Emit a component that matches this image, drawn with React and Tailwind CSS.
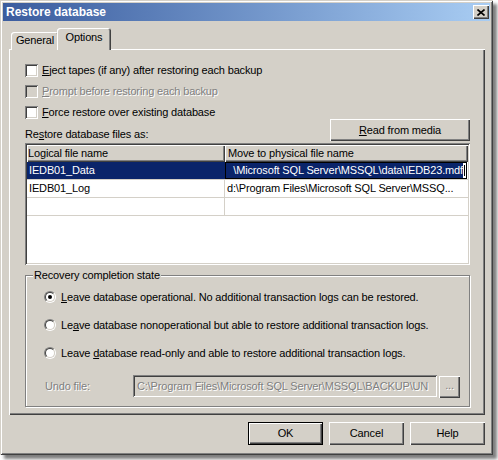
const raised = "shadow-[inset_1px_1px_0_#fff,inset_-1px_-1px_0_#404040,inset_-2px_-2px_0_#808080]";
const sunken = "shadow-[inset_1px_1px_0_#808080,inset_-1px_-1px_0_#fff,inset_2px_2px_0_#404040,inset_-2px_-2px_0_#d4d0c8]";
const dimText = "text-[#808080] [text-shadow:1px_1px_0_#fff]";

function Checkbox({ label, disabled }) {
  return (
    <div className="flex h-[21px] items-center">
      <div className={`h-[13px] w-[13px] ${sunken} ${disabled ? "bg-[#d4d0c8]" : "bg-white"}`} />
      <span className={`ml-[4px] ${disabled ? dimText : ""}`}>{label}</span>
    </div>
  );
}

function Radio({ checked, children }) {
  return (
    <div className="flex h-[28px] items-center pl-[18px]">
      <div className="h-[12px] w-[12px] rounded-full border border-t-[#808080] border-l-[#808080] border-r-white border-b-white">
        <div className="flex h-full w-full items-center justify-center rounded-full border border-t-[#404040] border-l-[#404040] border-r-[#d4d0c8] border-b-[#d4d0c8] bg-white">
          {checked && <div className="h-[4px] w-[4px] rounded-full bg-black" />}
        </div>
      </div>
      <span className="ml-[5px]">{children}</span>
    </div>
  );
}

function Button({ children, className = "", primary }) {
  return (
    <div className={`flex items-center justify-center bg-[#d4d0c8] ${primary ? "border border-black" : ""} ${className}`}>
      <div className={`flex h-full w-full items-center justify-center ${raised}`}>{children}</div>
    </div>
  );
}

export default function App() {
  return (
    <div className="h-[460px] w-[498px] bg-white text-[11px] tracking-[-0.15px] text-black [font-family:'Liberation_Sans',Arial,sans-serif]">
      <div className="flex h-[455px] w-[493px] flex-col bg-[#d4d0c8] p-[3px] shadow-[inset_1px_1px_0_#d4d0c8,inset_-1px_-1px_0_#404040,inset_2px_2px_0_#fff,inset_-2px_-2px_0_#808080,4px_4px_3px_rgba(0,0,0,0.5)]">
        {/* title bar */}
        <div className="flex h-[18px] items-center justify-between bg-gradient-to-r from-[#3b5c9e] to-[#a9cdf3] pl-[3px] pr-[1px]">
          <span className="text-[12px] font-bold tracking-normal text-white">Restore database</span>
          <div className={`flex h-[14px] w-[16px] items-center justify-center bg-[#d4d0c8] ${raised}`}>
            <svg width="8" height="7" viewBox="0 0 8 7">
              <path d="M0.5 0.5 L7.5 6.5 M7.5 0.5 L0.5 6.5" stroke="#000" strokeWidth="1.6" />
            </svg>
          </div>
        </div>

        <div className="flex flex-1 flex-col pl-[6px] pr-[5px]">
          {/* tabs */}
          <div className="relative z-10 mt-[7px] -mb-px flex h-[22px] items-end pl-[2px]">
            <div className="flex h-[18px] w-[48px] items-center justify-center rounded-t-[3px] bg-[#d4d0c8] pb-[1px] shadow-[inset_1px_1px_0_#fff,inset_-1px_0_0_#404040,inset_-2px_0_0_#808080]">
              General
            </div>
            <div className="-ml-[2px] flex h-[22px] w-[54px] items-center justify-center rounded-t-[3px] bg-[#d4d0c8] pb-[3px] shadow-[inset_1px_1px_0_#fff,inset_-1px_0_0_#404040,inset_-2px_0_0_#808080]">
              Options
            </div>
          </div>

          {/* panel */}
          <div className={`flex h-[366px] flex-col pl-[16px] pr-[15px] pt-[11px] ${raised}`}>
            <Checkbox label={<><u>E</u>ject tapes (if any) after restoring each backup</>} />
            <Checkbox disabled label={<><u>P</u>rompt before restoring each backup</>} />
            <Checkbox label={<><u>F</u>orce restore over existing database</>} />

            <div className="-mt-[4px] flex h-[22px] items-end justify-between">
              <span className="leading-[14px]">Re<u>s</u>tore database files as:</span>
              <Button className="h-[22px] w-[140px]"><span><u>R</u>ead from media</span></Button>
            </div>

            {/* file table */}
            <div className={`mt-[2px] flex h-[122px] flex-col bg-white p-[2px] ${sunken}`}>
              <div className="flex h-[17px] bg-[#d4d0c8]">
                <div className={`flex w-[198px] items-center pl-[1px] ${raised}`}>Logical file name</div>
                <div className={`flex flex-1 items-center pl-[3px] ${raised}`}>Move to physical file name</div>
              </div>
              <div className="flex h-[18px] border-b border-[#d4d0c8]">
                <div className="flex w-[198px] items-center bg-[#0a246a] pl-[2px] text-white">IEDB01_Data</div>
                <div className="mr-px flex flex-1 items-stretch whitespace-nowrap border border-black bg-white">
                  <span className="flex flex-1 items-center justify-end bg-[#0a246a] text-white">\Microsoft SQL Server\MSSQL\data\IEDB23.mdf</span>
                  <span className="ml-[1px] mr-[1px] my-[2px] w-px shrink-0 bg-black" />
                </div>
              </div>
              <div className="flex h-[18px] border-b border-[#d4d0c8]">
                <div className="flex w-[198px] items-center border-r border-[#d4d0c8] pl-[2px]">IEDB01_Log</div>
                <div className="flex flex-1 items-center whitespace-nowrap pl-[2px]">d:\Program Files\Microsoft SQL Server\MSSQ...</div>
              </div>
              <div className="flex h-[18px] border-b border-[#d4d0c8]">
                <div className="w-[198px] border-r border-[#d4d0c8]" />
                <div className="flex-1" />
              </div>
            </div>

            {/* recovery group */}
            <div className="relative mt-[10px] flex h-[132px] flex-col border border-[#808080] pt-[7px] shadow-[inset_1px_1px_0_#fff,1px_1px_0_#fff]">
              <span className="absolute -top-[7px] left-[7px] bg-[#d4d0c8] px-[1px] leading-[13px]">Recovery completion state</span>
              <Radio checked><u>L</u>eave database operational. No additional transaction logs can be restored.</Radio>
              <Radio>Le<u>a</u>ve database nonoperational but able to restore additional transaction logs.</Radio>
              <Radio>Leave <u>d</u>atabase read-only and able to restore additional transaction logs.</Radio>
              <div className="mt-[8px] flex h-[22px] items-center pl-[19px]">
                <span className={`w-[88px] ${dimText}`}>Undo file:</span>
                <div className={`flex h-[22px] w-[304px] items-center whitespace-nowrap bg-[#d4d0c8] pl-[4px] ${sunken}`}>
                  <span className={dimText}>C:\Program Files\Microsoft SQL Server\MSSQL\BACKUP\UN</span>
                </div>
                <Button className="ml-[2px] mt-[2px] h-[22px] w-[21px]"><span className={`pb-[3px] ${dimText}`}>...</span></Button>
              </div>
            </div>
          </div>

          {/* dialog buttons */}
          <div className="mt-[7px] flex justify-end gap-[6px]">
            <Button primary className="h-[23px] w-[75px]">OK</Button>
            <Button className="h-[23px] w-[75px]">Cancel</Button>
            <Button className="h-[23px] w-[75px]">Help</Button>
          </div>
        </div>
      </div>
    </div>
  );
}
